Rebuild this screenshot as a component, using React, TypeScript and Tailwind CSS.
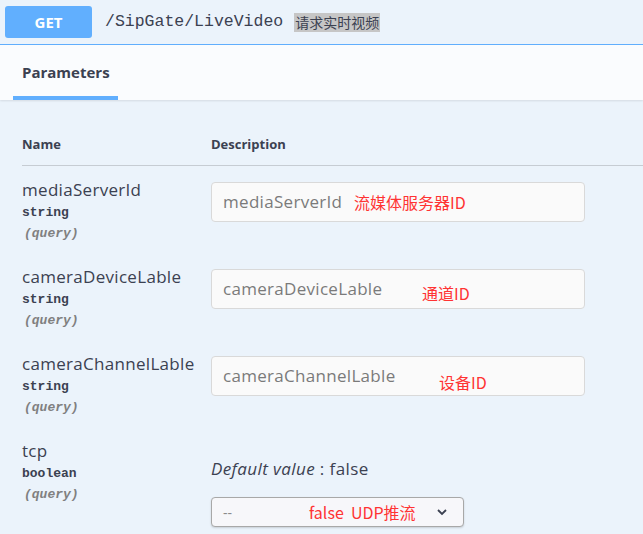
import React from "react";

const sans = { fontFamily: '"Open Sans", "Noto Sans", "Noto Sans CJK SC", sans-serif' };
const cjk = { fontFamily: '"Noto Sans CJK SC", "Noto Sans", sans-serif' };
const mono = { fontFamily: '"Liberation Mono", "DejaVu Sans Mono", monospace' };

function NameCell({ name, type }: { name: string; type: string }) {
  return (
    <div className="w-[189px] shrink-0 flex flex-col">
      <div className="text-[17px] tracking-[0.3px] leading-[20px] text-[#3b4151]" style={sans}>{name}</div>
      <div className="mt-[5px] text-[13px] leading-[16px] font-bold text-[#3b4151]" style={mono}>{type}</div>
      <div className="mt-[5px] text-[13px] leading-[16px] italic font-bold text-[#808080] pl-[2px]" style={mono}>(query)</div>
    </div>
  );
}

function TextRow({ name, note, noteLeft, noteTop }: { name: string; note: string; noteLeft: number; noteTop: number }) {
  return (
    <div className="h-[87px] pt-[14px] flex">
      <NameCell name={name} type="string" />
      <div className="relative mt-[2px] w-[374px] h-[40px] rounded-[4px] border border-[#d9d9d9] bg-[#fafafa] flex items-center pl-[11px]">
        <span className="text-[17px] tracking-[0.3px] text-[#7a7a7a]" style={sans}>{name}</span>
        <span
          className="absolute text-[16px] leading-[20px] text-[#f33]"
          style={{ ...cjk, left: noteLeft, top: noteTop }}
        >
          {note}
        </span>
      </div>
    </div>
  );
}

export default function App() {
  return (
    <div className="w-[643px] h-[534px] overflow-hidden bg-[#ebf3fb]" style={sans}>
      <div className="h-[45px] border-b border-[#61affe] flex items-center pl-[5px]">
        <div className="w-[87px] h-[32px] rounded-[3px] bg-[#61affe] flex items-center justify-center text-white font-bold text-[15px]">
          GET
        </div>
        <div className="ml-[13px] text-[16.5px] text-[#3b4151]" style={mono}>/SipGate/LiveVideo</div>
        <div className="ml-[11px] px-[1px] bg-[#c6c6c6] text-[14px] leading-[19px] text-[#3b4151]" style={cjk}>
          请求实时视频
        </div>
      </div>
      <div className="h-[55px] bg-[#fafcfe] shadow-[0_1px_2px_rgba(0,0,0,0.1)] pl-[13px] flex">
        <div className="w-[105px] h-full flex flex-col">
          <div className="flex-1 flex items-center pl-[9px] pt-[3px] text-[15px] font-bold text-[#3b4151]">Parameters</div>
          <div className="h-[4px] bg-[#61affe]" />
        </div>
      </div>
      <div className="pl-[22px]">
        <div className="h-[66px] pt-[36px] flex border-b border-[#c6ccd3] text-[13px] leading-[16px] font-bold text-[#3b4151]">
          <div className="w-[189px]">Name</div>
          <div>Description</div>
        </div>
        <TextRow name="mediaServerId" note="流媒体服务器ID" noteLeft={142} noteTop={9} />
        <TextRow name="cameraDeviceLable" note="通道ID" noteLeft={210} noteTop={13} />
        <TextRow name="cameraChannelLable" note="设备ID" noteLeft={227} noteTop={15} />
        <div className="pt-[14px] flex">
          <NameCell name="tcp" type="boolean" />
          <div className="flex flex-col">
            <div className="mt-[17px] text-[17px] tracking-[0.4px] leading-[22px] text-[#3b4151]">
              <i>Default value</i> : false
            </div>
            <div className="relative mt-[17px] w-[253px] h-[30px] rounded-[4px] border border-[#a8a8a8] bg-[#f7f7fa] shadow-[0_1px_2px_rgba(0,0,0,0.15)] flex items-center pl-[11px]">
              <span className="text-[14px] text-[#8a8a8a]">--</span>
              <span className="absolute left-[97px] top-[4px] text-[16px] leading-[20px] text-[#f33] whitespace-pre" style={cjk}>
                {"false  UDP推流"}
              </span>
              <svg className="absolute left-[224px] top-[10px]" width="12" height="8" viewBox="0 0 12 8">
                <path d="M2 2 L6 6 L10 2" fill="none" stroke="#3b4151" strokeWidth="1.8" />
              </svg>
            </div>
          </div>
        </div>
      </div>
    </div>
  );
}
